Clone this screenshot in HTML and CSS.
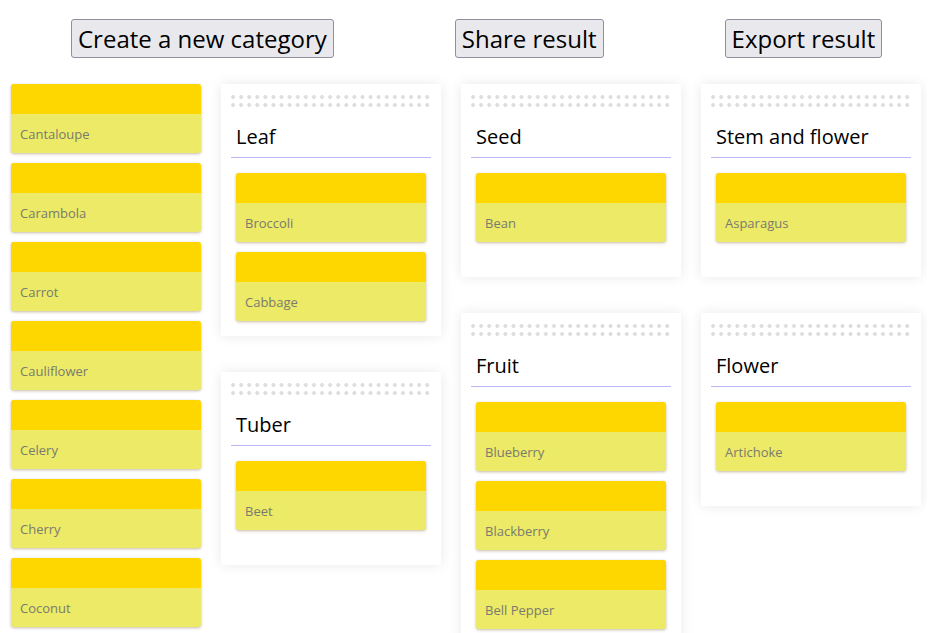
FILE: index.html
```html
<!DOCTYPE html>
<html lang="en">
<head>
<meta charset="utf-8">
<title>Categories</title>
<link rel="stylesheet" href="styles.css">
</head>
<body>
<div class="toolbar">
  <button class="btn">Create a new category</button>
  <button class="btn">Share result</button>
  <button class="btn">Export result</button>
</div>
<div class="board">
  <div class="pool">
    <div class="item"><div class="item-head"></div><div class="item-body">Cantaloupe</div></div>
    <div class="item"><div class="item-head"></div><div class="item-body">Carambola</div></div>
    <div class="item"><div class="item-head"></div><div class="item-body">Carrot</div></div>
    <div class="item"><div class="item-head"></div><div class="item-body">Cauliflower</div></div>
    <div class="item"><div class="item-head"></div><div class="item-body">Celery</div></div>
    <div class="item"><div class="item-head"></div><div class="item-body">Cherry</div></div>
    <div class="item"><div class="item-head"></div><div class="item-body">Coconut</div></div>
  </div>
  <div class="column">
    <div class="panel">
      <div class="handle"></div>
      <h2 class="panel-title">Leaf</h2>
      <div class="list">
        <div class="item"><div class="item-head"></div><div class="item-body">Broccoli</div></div>
        <div class="item"><div class="item-head"></div><div class="item-body">Cabbage</div></div>
      </div>
    </div>
    <div class="panel">
      <div class="handle"></div>
      <h2 class="panel-title">Tuber</h2>
      <div class="list">
        <div class="item"><div class="item-head"></div><div class="item-body">Beet</div></div>
      </div>
    </div>
  </div>
  <div class="column">
    <div class="panel">
      <div class="handle"></div>
      <h2 class="panel-title">Seed</h2>
      <div class="list">
        <div class="item"><div class="item-head"></div><div class="item-body">Bean</div></div>
      </div>
    </div>
    <div class="panel">
      <div class="handle"></div>
      <h2 class="panel-title">Fruit</h2>
      <div class="list">
        <div class="item"><div class="item-head"></div><div class="item-body">Blueberry</div></div>
        <div class="item"><div class="item-head"></div><div class="item-body">Blackberry</div></div>
        <div class="item"><div class="item-head"></div><div class="item-body">Bell Pepper</div></div>
      </div>
    </div>
  </div>
  <div class="column">
    <div class="panel">
      <div class="handle"></div>
      <h2 class="panel-title">Stem and flower</h2>
      <div class="list">
        <div class="item"><div class="item-head"></div><div class="item-body">Asparagus</div></div>
      </div>
    </div>
    <div class="panel">
      <div class="handle"></div>
      <h2 class="panel-title">Flower</h2>
      <div class="list">
        <div class="item"><div class="item-head"></div><div class="item-body">Artichoke</div></div>
      </div>
    </div>
  </div>
</div>
</body>
</html>
```
FILE: styles.css
```css
html, body {
  overflow: hidden;
}
body {
  margin: 8px;
  background: #ffffff;
  font-family: "Open Sans", "Noto Sans", sans-serif;
}
.toolbar {
  display: flex;
  gap: 121px;
  padding: 11px 0 0 63px;
}
.btn {
  font-family: "Open Sans", "Noto Sans", sans-serif;
  font-size: 24px;
  line-height: 33px;
  color: #000;
  background: #e9e9ed;
  border: 1px solid #8f8f9d;
  border-radius: 3px;
  padding: 1px 6px;
  height: 39px;
}
.btn-narrow {
  padding: 1px 5px;
}
.board {
  display: flex;
  align-items: flex-start;
  gap: 20px;
  margin-top: 26px;
}
.pool {
  width: 190px;
  padding-left: 3px;
}
.column {
  width: 220px;
  display: flex;
  flex-direction: column;
  gap: 35.4px;
}
.panel {
  background: #fff;
  box-shadow: 0 0 12px rgba(0, 0, 0, 0.09);
  padding: 9px 10px 5px;
}
.handle {
  height: 16px;
  background-image: radial-gradient(circle at 4px 4px, #dcdcdc 1.6px, transparent 2.2px);
  background-size: 8.1px 8px;
  background-position: -2px 0;
}
.panel-title {
  margin: 14px 0 0;
  padding: 0 5px 7px;
  font-size: 20px;
  font-weight: 400;
  line-height: 27.4px;
  color: #000;
  border-bottom: 1px solid #b8b8f8;
}
.list {
  box-sizing: border-box;
  min-height: 114px;
  padding: 15px 5px 0;
}
.item {
  margin-bottom: 10px;
  border-radius: 3px;
  overflow: hidden;
  box-shadow: 0 1px 3px rgba(90, 60, 0, 0.35);
  background: #ecea66;
}
.item-head {
  height: 30px;
  background: #ffd700;
}
.item-body {
  height: 39px;
  box-sizing: border-box;
  padding: 11px 9px 9px;
  font-size: 13px;
  line-height: 19px;
  color: #7a7a70;
}
```
